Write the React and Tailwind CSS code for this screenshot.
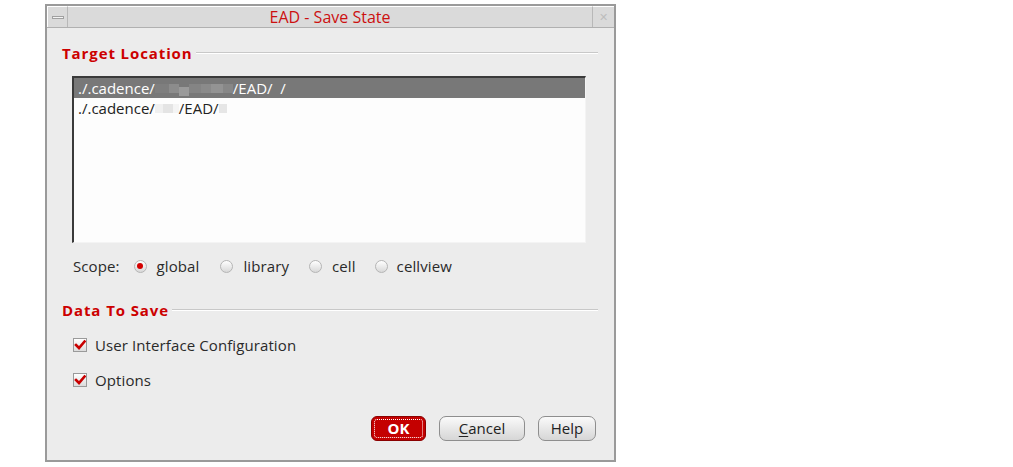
import React from "react";

const font = { fontFamily: '"Open Sans", "Noto Sans", sans-serif' };

function Blocks({ items }) {
  return (
    <span className="inline-flex h-[20px] items-center">
      {items.map((c, i) => (
        <span key={i} className="inline-block h-[9px]" style={{ width: c[0], background: c[1], marginTop: c[2] || 0 }} />
      ))}
    </span>
  );
}

function Radio({ checked }) {
  return (
    <span className="inline-flex h-[13px] w-[13px] items-center justify-center rounded-full border border-[#b5b5b5] bg-gradient-to-b from-[#ffffff] to-[#d8d8d8]">
      {checked && <span className="h-[6px] w-[6px] rounded-full bg-[#d40000]" />}
    </span>
  );
}

function Check() {
  return (
    <span className="inline-flex h-[14px] w-[14px] items-center justify-center border border-[#9a9a9a] bg-gradient-to-b from-[#ffffff] to-[#dcdcdc]">
      <svg width="12" height="12" viewBox="0 0 12 12">
        <path d="M2 6 L5 9 L10.5 2.5" stroke="#c80000" strokeWidth="2.6" fill="none" strokeLinecap="square" />
      </svg>
    </span>
  );
}

function Heading({ children }) {
  return (
    <div className="flex h-[20px] items-center">
      <span className="text-[15px] font-bold tracking-[0.9px] text-[#cc0000]">{children}</span>
      <div className="ml-[3px] h-[2px] flex-1 border-t border-[#c8c8c8] border-b-white" style={{ borderBottomWidth: 1 }} />
    </div>
  );
}

export default function App() {
  return (
    <div className="h-[467px] w-[1013px] bg-white" style={font}>
      <div className="ml-[45px] pt-[4px]">
        <div className="flex h-[458px] w-[571px] flex-col border-2 border-[#9a9a9a] bg-[#ececec]">
          {/* title bar */}
          <div className="flex h-[22px] border-b border-[#b0b0b0] bg-[#dadada]">
            <div className="flex w-[21px] items-center justify-center border-r border-[#b8b8b8] border-l border-l-white border-t border-t-white">
              <span className="block h-[3px] w-[12px] border border-[#a0a0a0] bg-[#f4f4f4]" />
            </div>
            <div className="flex flex-1 items-center justify-center border-t border-t-white text-[16px] text-[#cc1010]">
              EAD - Save State
            </div>
            <div className="flex w-[22px] items-center justify-center border-l border-[#b8b8b8] border-t border-t-white text-[11px] text-[#bdbdbd]">
              ✕
            </div>
          </div>

          <div className="flex flex-1 flex-col pl-[15px] pr-[16px] pt-[15px]">
            <Heading>Target Location</Heading>

            <div className="ml-[10px] mr-[12px] mt-[13px] h-[167px] border-l-2 border-t-2 border-[#3a3a3a] border-r border-b border-r-[#f4f4f4] border-b-[#f4f4f4] bg-[#fdfdfd] text-[15px]">
              <div className="flex h-[20px] items-center bg-[#787878] pl-[4px] text-white">
                <span>./.cadence/</span>
                <Blocks items={[[14, "#7e7e7e"], [10, "#8c8c8c"], [10, "#9a9a9a", 6], [12, "#848484"], [10, "#8a8a8a"], [12, "#939393"], [10, "#878787"]]} />
                <span>/EAD/&nbsp;&nbsp;/</span>
              </div>
              <div className="flex h-[20px] items-center pl-[4px] text-[#222]">
                <span>./.cadence/</span>
                <Blocks items={[[8, "#f0f0f0"], [10, "#e4e4e4"], [6, "#f4f4f4"]]} />
                <span>/EAD/</span>
                <Blocks items={[[8, "#e6e6e6"]]} />
              </div>
            </div>

            <div className="ml-[11px] mt-[13px] flex h-[20px] items-center text-[15px] tracking-[0.1px] text-[#2a2a2a]">
              <span>Scope:</span>
              <span className="ml-[14px] flex items-center"><Radio checked /><span className="ml-[10px]">global</span></span>
              <span className="ml-[21px] flex items-center"><Radio /><span className="ml-[10px]">library</span></span>
              <span className="ml-[20px] flex items-center"><Radio /><span className="ml-[10px]">cell</span></span>
              <span className="ml-[19px] flex items-center"><Radio /><span className="ml-[9px]">cellview</span></span>
            </div>

            <div className="mt-[24px]">
              <Heading>Data To Save</Heading>
            </div>

            <div className="ml-[11px] mt-[15px] flex h-[20px] items-center text-[15px] tracking-[0.1px] text-[#2a2a2a]">
              <Check /><span className="ml-[8px]">User Interface Configuration</span>
            </div>
            <div className="ml-[11px] mt-[15px] flex h-[20px] items-center text-[15px] tracking-[0.1px] text-[#2a2a2a]">
              <Check /><span className="ml-[8px]">Options</span>
            </div>

            <div className="mt-[26px] flex justify-end gap-[13px] pr-[2px]">
              <button className="flex h-[25px] w-[55px] items-center justify-center rounded-[6px] border border-[#8a0000] bg-[#c40000] p-[2px]">
                <span className="flex h-full w-full items-center justify-center rounded-[3px] border border-dotted border-white text-[15px] font-bold text-white">OK</span>
              </button>
              <button className="flex h-[25px] w-[86px] items-center justify-center rounded-[7px] border border-[#8e8e8e] bg-gradient-to-b from-[#fafafa] to-[#d6d6d6] text-[15px] text-[#222]">
                <span><span className="underline underline-offset-2">C</span>ancel</span>
              </button>
              <button className="flex h-[25px] w-[58px] items-center justify-center rounded-[7px] border border-[#8e8e8e] bg-gradient-to-b from-[#fafafa] to-[#d6d6d6] text-[15px] text-[#222]">
                Help
              </button>
            </div>
          </div>
        </div>
      </div>
    </div>
  );
}
